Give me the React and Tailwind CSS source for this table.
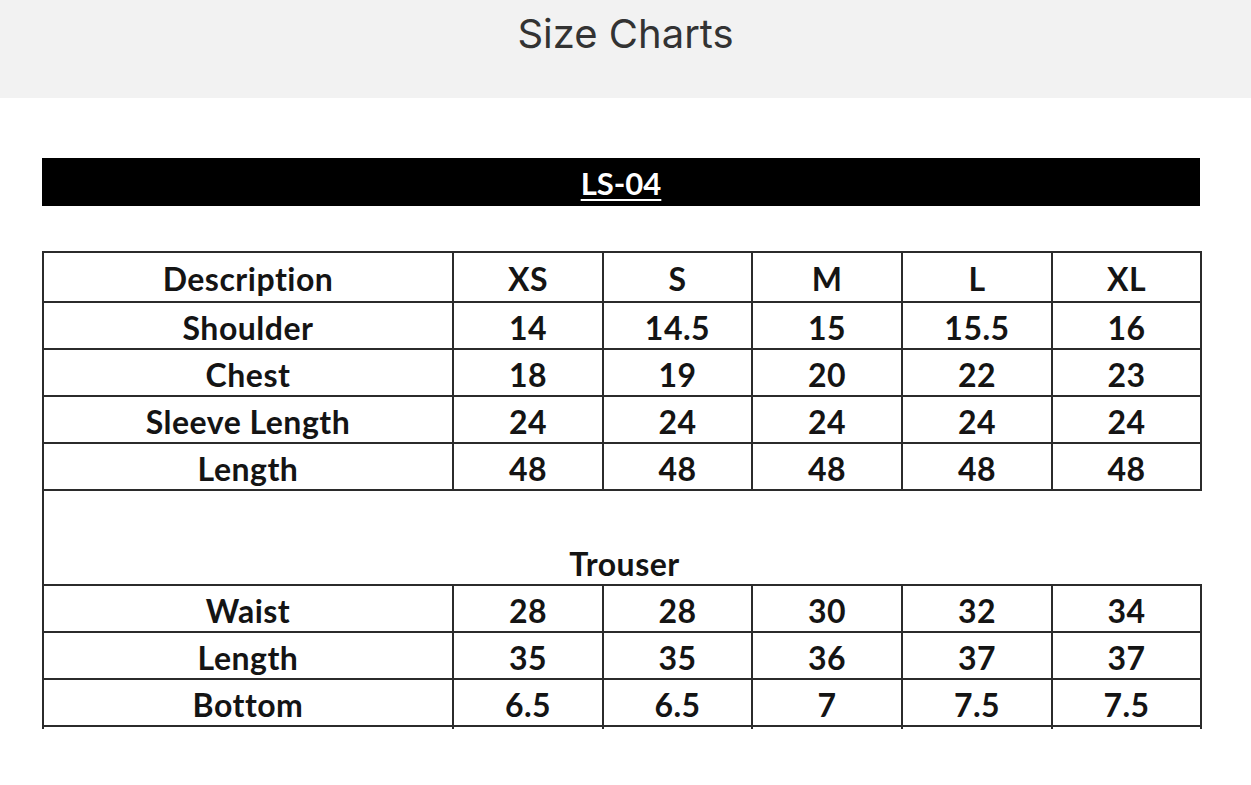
const sizes = ['XS', 'S', 'M', 'L', 'XL'];

const top = [
  ['Shoulder', '14', '14.5', '15', '15.5', '16'],
  ['Chest', '18', '19', '20', '22', '23'],
  ['Sleeve Length', '24', '24', '24', '24', '24'],
  ['Length', '48', '48', '48', '48', '48'],
];

const trouser = [
  ['Waist', '28', '28', '30', '32', '34'],
  ['Length', '35', '35', '36', '37', '37'],
  ['Bottom', '6.5', '6.5', '7', '7.5', '7.5'],
];

const cell = 'border-2 border-[#2b2b2b] text-center p-0 pt-[4px] align-middle';

const Row = ({ cells, h }) => (
  <tr className={h}>
    {cells.map((c, i) => (
      <td key={i} className={cell}>{c}</td>
    ))}
  </tr>
);

const App = () => {
  return (
    <div className="bg-white min-h-[785px] w-[1251px]">
      <header className="h-[98px] bg-[#f2f2f2] flex justify-center pt-[10px]">
        <h1 className="text-[40px] leading-[48px] text-[#333333] font-['Inter',sans-serif] font-normal">Size Charts</h1>
      </header>

      <div className="pl-[42px] pt-[60px] font-['Lato',sans-serif] font-bold text-[#141414]">
        <div className="w-[1158px] h-[48px] bg-black flex items-center justify-center pt-[2px]">
          <span className="text-white text-[31px] leading-none underline underline-offset-[4px] decoration-2">LS-04</span>
        </div>

        <div className="h-[45px]" />

        <div className="w-[1160px] overflow-hidden h-[478px]">
          <table className="border-collapse table-fixed w-[1158px] text-[32px] leading-none tracking-[0.5px]">
            <colgroup>
              <col className="w-[410px]" />
              <col className="w-[150px]" />
              <col className="w-[149px]" />
              <col className="w-[150px]" />
              <col className="w-[150px]" />
              <col className="w-[149px]" />
            </colgroup>
            <tbody>
              <Row cells={['Description', ...sizes]} h="h-[50px]" />
              {top.map((r, i) => (
                <Row key={i} cells={r} h="h-[47px]" />
              ))}
              <tr className="h-[48px]">
                <td colSpan={6} className="border-l-2 border-[#2b2b2b] p-0" />
              </tr>
              <tr className="h-[47px]">
                <td colSpan={6} className="border-l-2 border-b-2 border-[#2b2b2b] p-0 text-center align-bottom pb-[4px] pl-[4px]">Trouser</td>
              </tr>
              {trouser.map((r, i) => (
                <Row key={i} cells={r} h="h-[47px]" />
              ))}
              <tr className="h-[20px]">
                {sizes.concat(['']).map((_, i) => (
                  <td key={i} className="border-x-2 border-[#2b2b2b] p-0" />
                ))}
              </tr>
            </tbody>
          </table>
        </div>
      </div>
    </div>
  );
};

export default App;
